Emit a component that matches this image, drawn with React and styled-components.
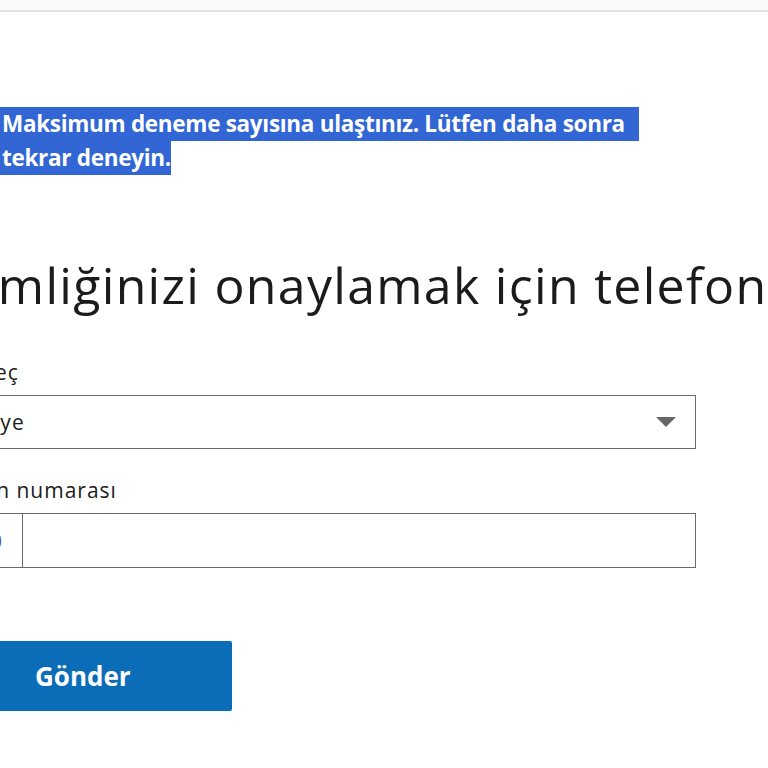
import React from 'react';
import styled, { createGlobalStyle } from 'styled-components';

const GlobalStyle = createGlobalStyle`
    html, body {
        margin: 0;
        padding: 0;
        background: #ffffff;
        overflow: hidden;
    }
    body {
        font-family: "Open Sans", "Noto Sans", sans-serif;
        color: #1b1b1b;
    }
`;

const Page = styled.div`
    width: 768px;
    height: 768px;
    overflow: hidden;
    background: #ffffff;
`;

const TopStrip = styled.div`
    height: 10px;
    background: #fafafa;
    border-bottom: 2px solid #e4e4e4;
`;

// the form column runs wider than the window and is scrolled a little to the right
const Content = styled.div`
    margin-left: -70px;
    padding-top: 95px;
    display: flex;
    flex-direction: column;
`;

const Notice = styled.div`
    margin-left: 70px;
    display: flex;
    flex-direction: column;
    font-size: 22.5px;
    font-weight: 700;
    letter-spacing: -0.3px;
    color: #ffffff;
`;

const Selected = styled.span`
    display: block;
    width: fit-content;
    height: 34px;
    line-height: 34px;
    padding-left: 2px;
    padding-right: ${({ $tail }) => $tail}px;
    background: #3166d4;
    white-space: nowrap;
`;

const Heading = styled.h1`
    margin: 78px 0 0 22px;
    font-size: 50px;
    font-weight: 400;
    line-height: 64px;
    letter-spacing: 1.3px;
    color: #1b1b1b;
    white-space: nowrap;
`;

const Field = styled.div`
    display: flex;
    flex-direction: column;
    margin-top: ${({ $gap }) => $gap}px;
    width: 766px;
    font-size: 21px;
    letter-spacing: 1px;
`;

const Label = styled.label`
    line-height: 26px;
    margin-bottom: 10px;
    color: #1b1b1b;
`;

const SelectBox = styled.div`
    height: 54px;
    box-sizing: border-box;
    border: 1.5px solid #6b6b6b;
    display: flex;
    align-items: center;
    justify-content: space-between;
    padding: 0 18px 0 15px;
`;

const Caret = styled.svg`
    width: 22px;
    height: 12px;
`;

const PhoneBox = styled.div`
    height: 55px;
    box-sizing: border-box;
    border: 1.5px solid #6b6b6b;
    display: flex;
    align-items: stretch;
`;

const Prefix = styled.div`
    width: 92px;
    box-sizing: border-box;
    border-right: 1.5px solid #6b6b6b;
    display: flex;
    align-items: center;
    padding-left: 33px;
    color: #4a4ab8;
`;

const NumberInput = styled.input`
    flex: 1;
    border: none;
    outline: none;
    font: inherit;
    padding: 0 12px;
    background: transparent;
`;

const SubmitButton = styled.button`
    margin-top: 73px;
    width: 302px;
    height: 70px;
    border: none;
    border-radius: 2px;
    background: #0b6cb8;
    color: #ffffff;
    font-family: "Open Sans", "Noto Sans", sans-serif;
    font-size: 26px;
    font-weight: 700;
    text-align: left;
    padding-left: 105px;
    cursor: pointer;
`;

export default function App() {
    return (
        <Page>
            <GlobalStyle />
            <TopStrip />
            <Content>
                <Notice>
                    <Selected $tail={14}>Maksimum deneme sayısına ulaştınız. Lütfen daha sonra</Selected>
                    <Selected $tail={0}>tekrar deneyin.</Selected>
                </Notice>
                <Heading>Kimliğinizi onaylamak için telefonunuzu girin</Heading>
                <Field $gap={42}>
                    <Label>Ülke seç</Label>
                    <SelectBox>
                        <span>Türkiye</span>
                        <Caret viewBox="0 0 22 12">
                            <path d="M1 1h20L11 11z" fill="#666666" />
                        </Caret>
                    </SelectBox>
                </Field>
                <Field $gap={28}>
                    <Label>Telefon numarası</Label>
                    <PhoneBox>
                        <Prefix>+90</Prefix>
                        <NumberInput type="tel" />
                    </PhoneBox>
                </Field>
                <SubmitButton>Gönder</SubmitButton>
            </Content>
        </Page>
    );
}
